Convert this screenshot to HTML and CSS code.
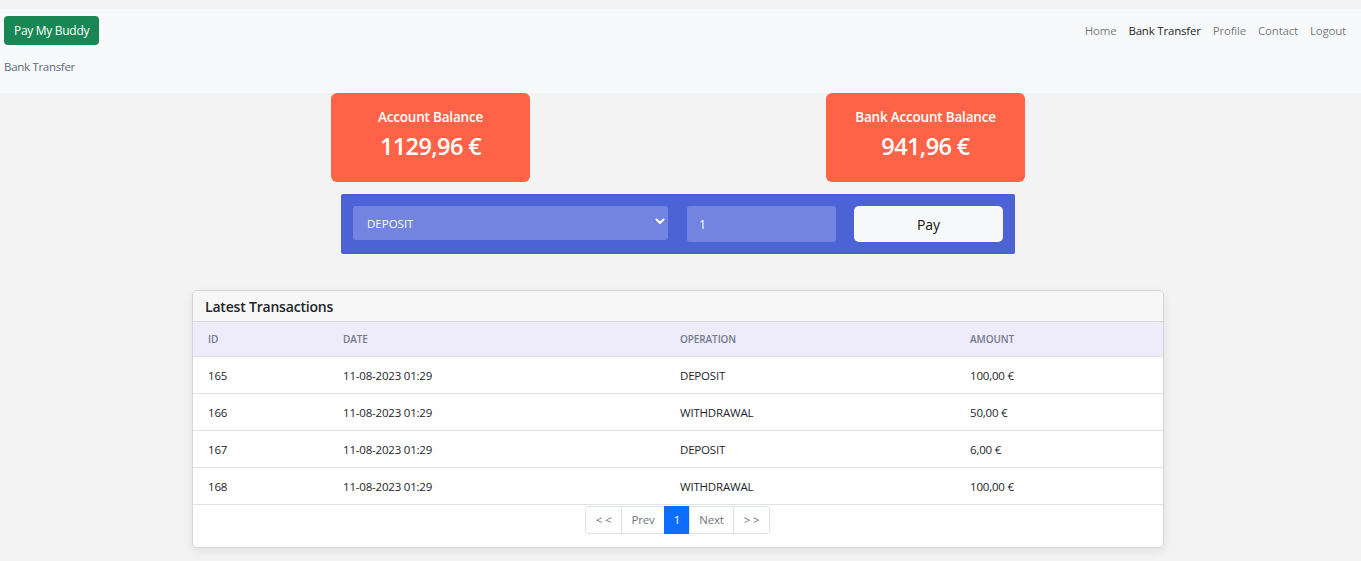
FILE: index.html
```html
<!DOCTYPE html>
<html lang="en">
<head>
<meta charset="utf-8">
<title>Pay My Buddy - Bank Transfer</title>
<link rel="stylesheet" href="styles.css">
</head>
<body>
<header class="navbar">
  <div class="nav-top">
    <a class="brand" href="#">Pay My Buddy</a>
    <nav class="nav-links">
      <a href="#" class="nav-link">Home</a>
      <a href="#" class="nav-link active">Bank Transfer</a>
      <a href="#" class="nav-link">Profile</a>
      <a href="#" class="nav-link">Contact</a>
      <a href="#" class="nav-link">Logout</a>
    </nav>
  </div>
  <div class="breadcrumb">Bank Transfer</div>
</header>
<main class="main">
  <section class="balances">
    <div class="balance-card">
      <div class="balance-title">Account Balance</div>
      <div class="balance-value">1129,96 €</div>
    </div>
    <div class="balance-card">
      <div class="balance-title">Bank Account Balance</div>
      <div class="balance-value">941,96 €</div>
    </div>
  </section>
  <form class="transfer-form">
    <div class="select-wrap">
      <select class="field select">
        <option>DEPOSIT</option>
        <option>WITHDRAWAL</option>
      </select>
      <svg class="chevron" width="10" height="7" viewBox="0 0 10 7"><path d="M1.5 1.5 L5 5 L8.5 1.5" fill="none" stroke="#fff" stroke-width="2" stroke-linecap="round" stroke-linejoin="round"/></svg>
    </div>
    <input class="field amount" type="text" value="1">
    <button class="pay-btn" type="button">Pay</button>
  </form>
  <section class="tx-card">
    <div class="tx-header">Latest Transactions</div>
    <table class="tx-table">
      <colgroup>
        <col class="c-id"><col class="c-date"><col class="c-op"><col class="c-amt">
      </colgroup>
      <thead>
        <tr><th>ID</th><th>DATE</th><th>OPERATION</th><th>AMOUNT</th></tr>
      </thead>
      <tbody>
        <tr><td>165</td><td>11-08-2023 01:29</td><td>DEPOSIT</td><td>100,00 €</td></tr>
        <tr><td>166</td><td>11-08-2023 01:29</td><td>WITHDRAWAL</td><td>50,00 €</td></tr>
        <tr><td>167</td><td>11-08-2023 01:29</td><td>DEPOSIT</td><td>6,00 €</td></tr>
        <tr><td>168</td><td>11-08-2023 01:29</td><td>WITHDRAWAL</td><td>100,00 €</td></tr>
      </tbody>
    </table>
    <div class="pager-row">
      <ul class="pagination">
        <li><a href="#" class="w-edge">&lt; &lt;</a></li>
        <li><a href="#" class="w-prev">Prev</a></li>
        <li><a href="#" class="active w-one">1</a></li>
        <li><a href="#" class="w-next">Next</a></li>
        <li><a href="#" class="w-edge">&gt; &gt;</a></li>
      </ul>
    </div>
  </section>
</main>
</body>
</html>
```

FILE: styles.css
```css
* { box-sizing: border-box; }
html, body { margin: 0; padding: 0; }
body {
  background: #f3f3f3;
  font-family: "Open Sans", "Noto Sans", "Liberation Sans", sans-serif;
  color: #212529;
  height: 561px;
  overflow: hidden;
}
a { text-decoration: none; }

.navbar {
  margin-top: 9px;
  height: 84px;
  background: #f8f9fa;
  padding: 7px 4px 0 4px;
}
.nav-top {
  display: flex;
  justify-content: space-between;
  align-items: center;
  height: 29px;
}
.brand {
  display: inline-flex;
  align-items: center;
  height: 29px;
  padding: 0 10px;
  background: #198754;
  color: #fff;
  border-radius: 4px;
  font-size: 12px;
  letter-spacing: -0.3px;
}
.nav-links { display: flex; padding-right: 5px; }
.nav-link {
  color: rgba(0,0,0,0.55);
  font-size: 11.5px;
  padding: 0 6px;
  letter-spacing: -0.2px;
}
.nav-link.active { color: rgba(0,0,0,0.9); }
.breadcrumb {
  margin-top: 14px;
  font-size: 11.5px;
  color: #5b6a7d;
  letter-spacing: -0.3px;
}

.main {
  width: 972px;
  margin-left: calc(50% - 488.5px);
}
.balances {
  display: flex;
  justify-content: space-between;
  padding: 0 139px;
}
.balance-card {
  width: 199px;
  height: 89px;
  background: #ff6347;
  color: #fff;
  border-radius: 6px;
  text-align: center;
  padding-top: 15px;
}
.balance-title { font-size: 13.5px; font-weight: 600; letter-spacing: -0.2px; }
.balance-value { font-size: 23.5px; font-weight: 600; margin-top: 4px; letter-spacing: -0.6px; }

.transfer-form {
  margin: 12px 149px 0 149px;
  height: 60px;
  background: #4c63d5;
  border-radius: 2px;
  padding: 12px;
  display: flex;
  align-items: flex-start;
}
.select-wrap { position: relative; width: 315px; }
.field {
  height: 34px;
  background: #7283e0;
  border: none;
  border-radius: 3px;
  color: #fff;
  font-family: inherit;
  font-size: 11.5px;
  outline: none;
}
.select {
  width: 315px;
  padding: 0 14px;
  appearance: none;
  -webkit-appearance: none;
}
.chevron { position: absolute; right: 3px; top: 12px; }
.amount {
  width: 149px;
  height: 36px;
  margin-left: 19px;
  padding: 0 12px;
  font-size: 12.5px;
}
.pay-btn {
  width: 149px;
  height: 36px;
  margin-left: 18px;
  background: #f8f9fa;
  border: none;
  border-radius: 5px;
  font-family: inherit;
  font-size: 14px;
  color: #111;
}

.tx-card {
  margin-top: 36px;
  background: #fff;
  border: 1px solid #d6d6d6;
  border-radius: 5px;
  box-shadow: 0 3px 10px rgba(0,0,0,0.08);
  overflow: hidden;
}
.tx-header {
  height: 31px;
  background: #f7f7f7;
  padding: 0 12px;
  display: flex;
  align-items: center;
  font-size: 14px;
  font-weight: 600;
  letter-spacing: -0.2px;
  border-bottom: 1px solid #d9d9d9;
}
.tx-table {
  width: 100%;
  border-collapse: collapse;
  table-layout: fixed;
}
.c-id { width: 135px; }
.c-date { width: 337px; }
.c-op { width: 290px; }
.c-amt { width: auto; }
.tx-table th, .tx-table td {
  text-align: left;
  padding: 0 0 0 15px;
  border-bottom: 1px solid #dee2e6;
}
.tx-table th {
  height: 34px;
  background: #eeebfb;
  font-size: 10px;
  font-weight: 600;
  color: #727c8a;
  letter-spacing: -0.1px;
}
.tx-table td {
  height: 37px;
  padding-top: 1px;
  font-size: 11.5px;
  color: #212529;
  letter-spacing: -0.2px;
}
.pager-row {
  height: 42px;
  display: flex;
  justify-content: center;
  padding-top: 1px;
  padding-right: 1px;
}
.pagination {
  list-style: none;
  display: flex;
  margin: 0;
  padding: 0;
  height: 28px;
}
.pagination a {
  display: flex;
  align-items: center;
  justify-content: center;
  height: 28px;
  border: 1px solid #dee2e6;
  margin-left: -1px;
  font-size: 11.5px;
  color: #6c757d;
  background: #fff;
  letter-spacing: -0.2px;
}
.pagination li:first-child a { border-radius: 4px 0 0 4px; margin-left: 0; }
.pagination li:last-child a { border-radius: 0 4px 4px 0; }
.pagination a.active { background: #0d6efd; border-color: #0d6efd; color: #fff; }
.w-edge { width: 37px; }
.w-prev { width: 44px; }
.w-one { width: 26px; }
.w-next { width: 45px; }
```
